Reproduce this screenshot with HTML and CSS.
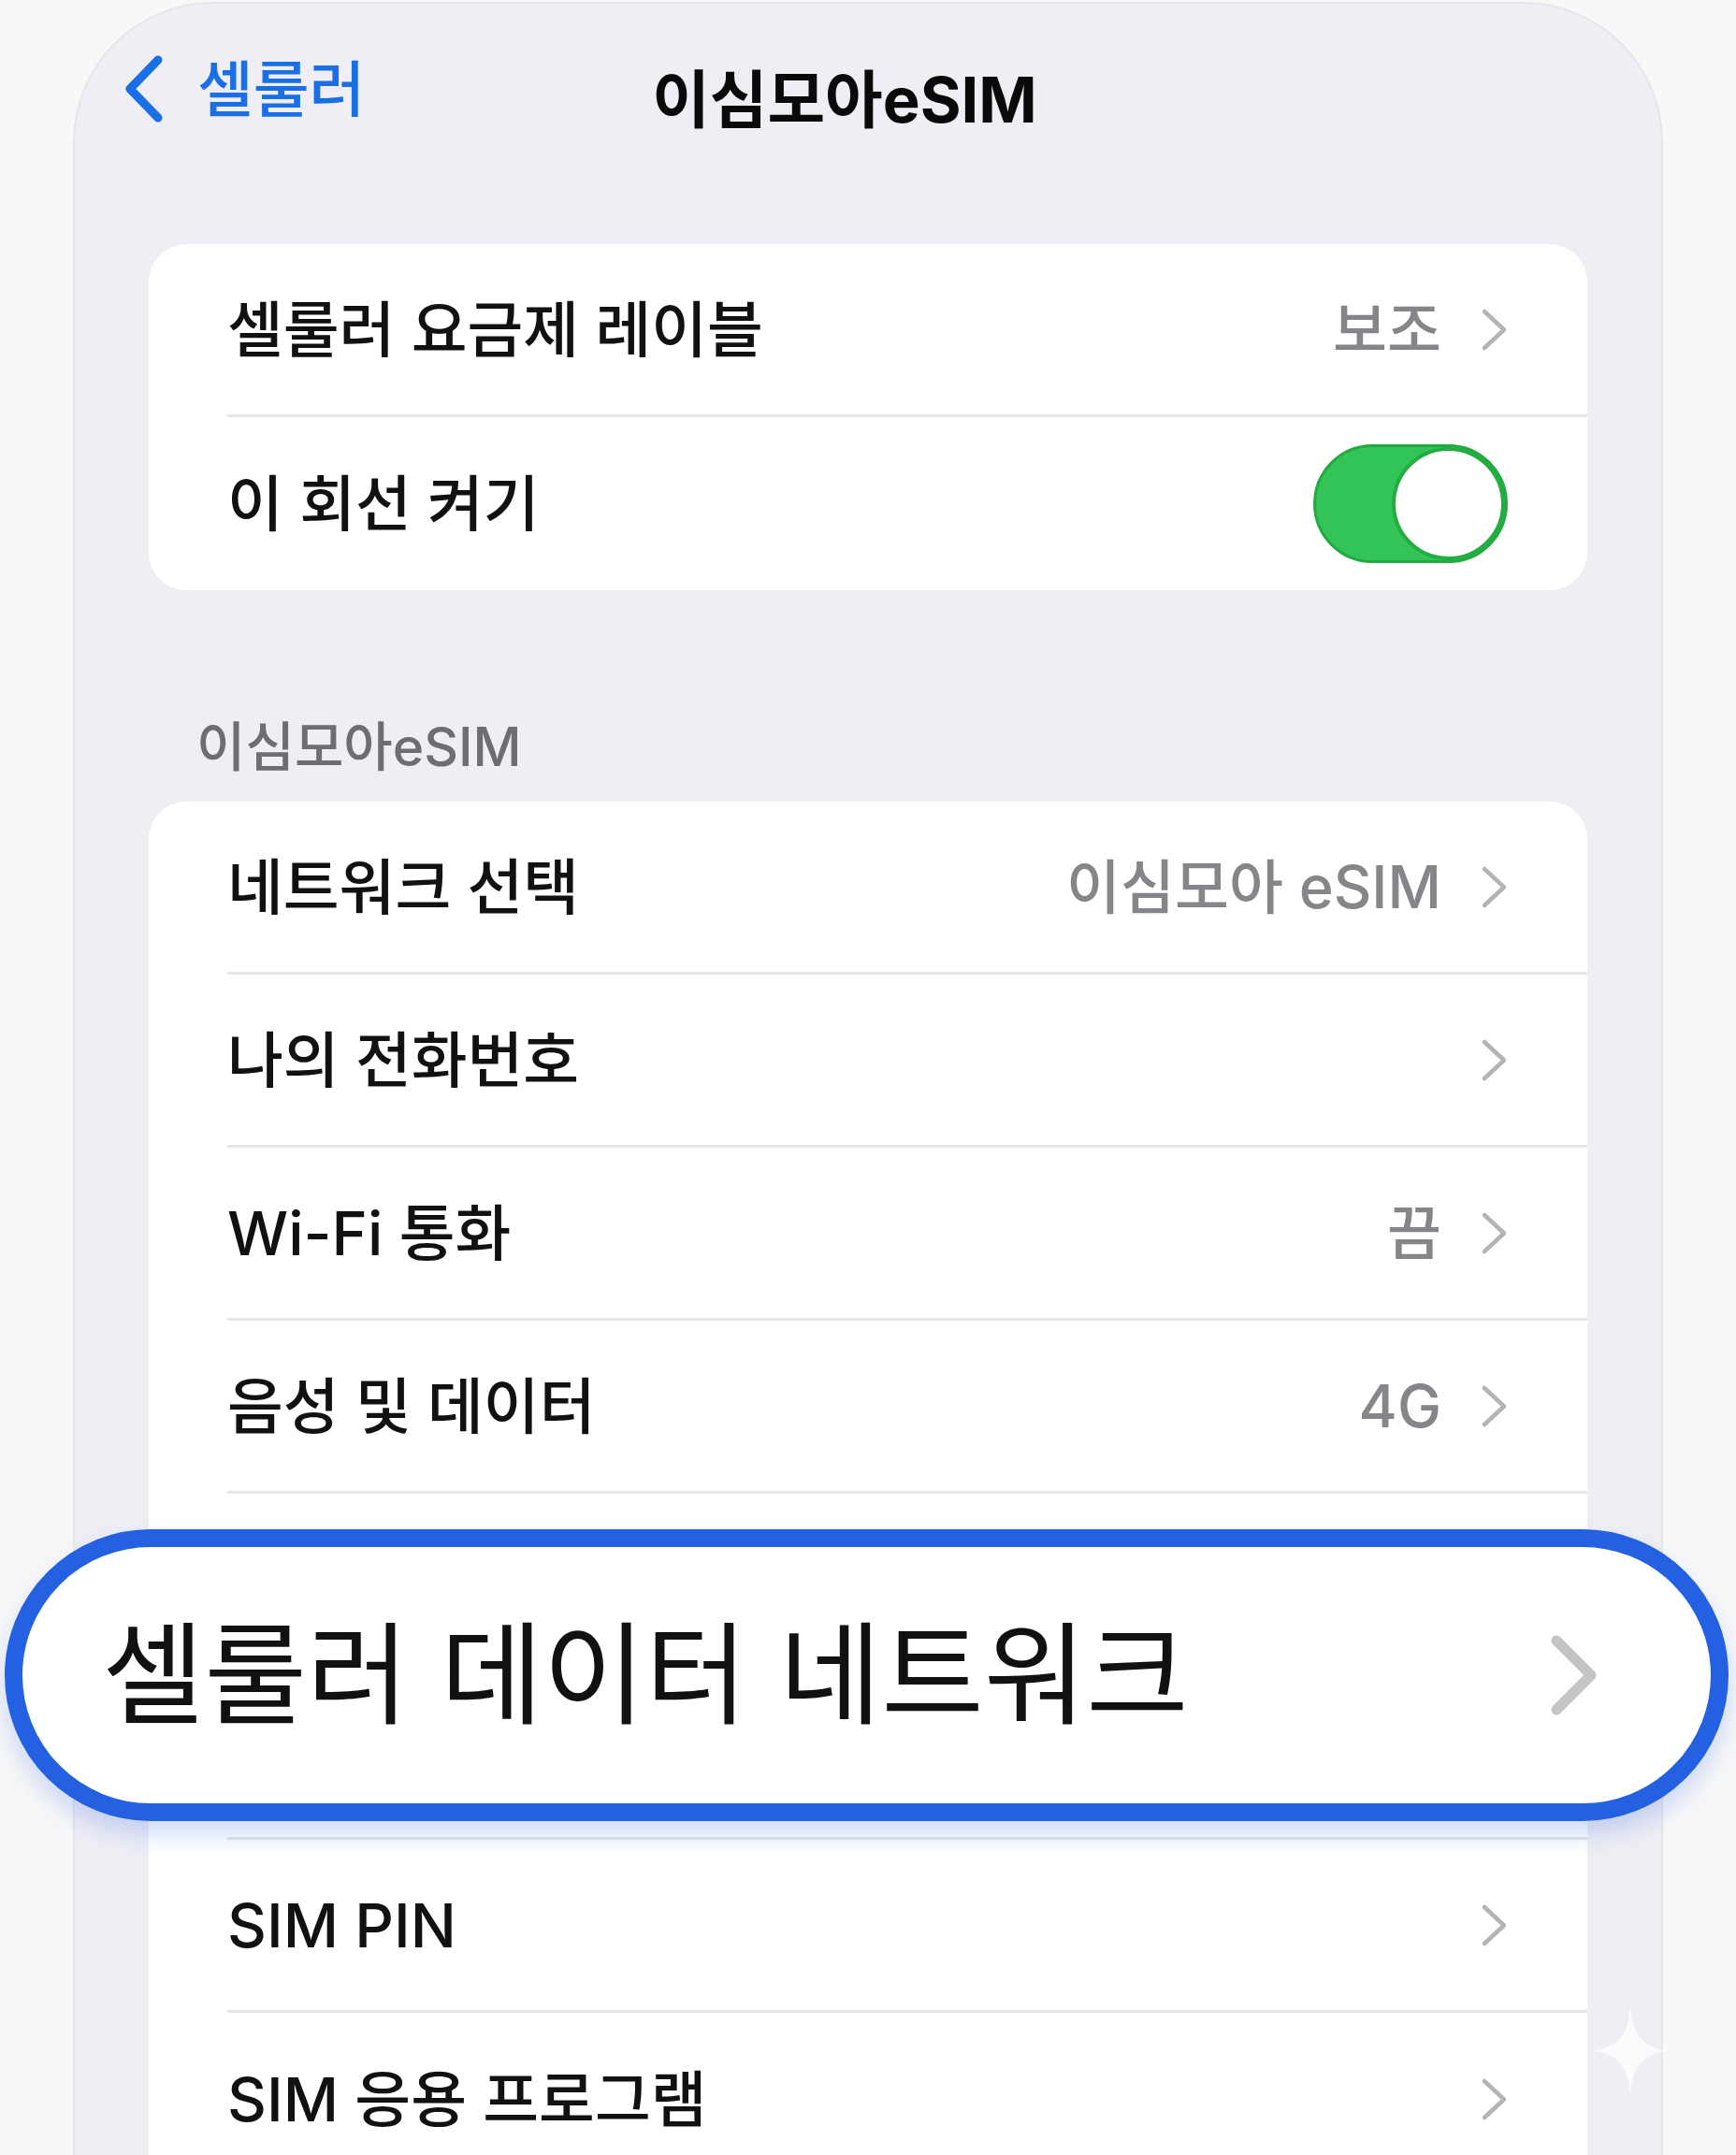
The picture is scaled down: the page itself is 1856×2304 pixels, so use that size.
FILE: index.html
```html
<!DOCTYPE html>
<html lang="ko">
<head>
<meta charset="utf-8">
<title>이심모아eSIM</title>
<link rel="stylesheet" href="styles.css">
</head>
<body>
<div class="phone">
  <header class="nav">
    <a class="back">
      <svg class="back-chev" width="43" height="74" viewBox="0 0 43 74"><path d="M37 6 L7 37 L37 68" fill="none" stroke="#1b6fe6" stroke-width="9" stroke-linecap="round" stroke-linejoin="round"/></svg>
      <span class="back-label">셀룰러</span>
    </a>
    <h1 class="title">이심모아eSIM</h1>
    <span class="nav-spacer"></span>
  </header>

  <section class="group">
    <div class="row"><div class="row-body">
      <span class="label">셀룰러 요금제 레이블</span>
      <span class="detail"><span class="value">보조</span><svg class="chev" width="29" height="47" viewBox="0 0 29 47"><path d="M4 4 L25 23.5 L4 43" fill="none" stroke="#b3b3b8" stroke-width="4.5" stroke-linecap="round" stroke-linejoin="round"/></svg></span>
    </div></div>
    <div class="row"><div class="row-body">
      <span class="label">이 회선 켜기</span>
      <span class="toggle"><span class="knob"></span></span>
    </div></div>
  </section>

  <div class="section-title">이심모아eSIM</div>

  <section class="group">
    <div class="row"><div class="row-body">
      <span class="label">네트워크 선택</span>
      <span class="detail"><span class="value">이심모아 eSIM</span><svg class="chev" width="29" height="47" viewBox="0 0 29 47"><path d="M4 4 L25 23.5 L4 43" fill="none" stroke="#b3b3b8" stroke-width="4.5" stroke-linecap="round" stroke-linejoin="round"/></svg></span>
    </div></div>
    <div class="row"><div class="row-body">
      <span class="label">나의 전화번호</span>
      <span class="detail"><svg class="chev" width="29" height="47" viewBox="0 0 29 47"><path d="M4 4 L25 23.5 L4 43" fill="none" stroke="#b3b3b8" stroke-width="4.5" stroke-linecap="round" stroke-linejoin="round"/></svg></span>
    </div></div>
    <div class="row"><div class="row-body">
      <span class="label">Wi-Fi 통화</span>
      <span class="detail"><span class="value">끔</span><svg class="chev" width="29" height="47" viewBox="0 0 29 47"><path d="M4 4 L25 23.5 L4 43" fill="none" stroke="#b3b3b8" stroke-width="4.5" stroke-linecap="round" stroke-linejoin="round"/></svg></span>
    </div></div>
    <div class="row"><div class="row-body">
      <span class="label">음성 및 데이터</span>
      <span class="detail"><span class="value">4G</span><svg class="chev" width="29" height="47" viewBox="0 0 29 47"><path d="M4 4 L25 23.5 L4 43" fill="none" stroke="#b3b3b8" stroke-width="4.5" stroke-linecap="round" stroke-linejoin="round"/></svg></span>
    </div></div>
    <div class="row"><div class="row-body"></div></div>
    <div class="row"><div class="row-body"></div></div>
    <div class="row"><div class="row-body">
      <span class="label">SIM PIN</span>
      <span class="detail"><svg class="chev" width="29" height="47" viewBox="0 0 29 47"><path d="M4 4 L25 23.5 L4 43" fill="none" stroke="#b3b3b8" stroke-width="4.5" stroke-linecap="round" stroke-linejoin="round"/></svg></span>
    </div></div>
    <div class="row"><div class="row-body">
      <span class="label">SIM 응용 프로그램</span>
      <span class="detail"><svg class="chev" width="29" height="47" viewBox="0 0 29 47"><path d="M4 4 L25 23.5 L4 43" fill="none" stroke="#b3b3b8" stroke-width="4.5" stroke-linecap="round" stroke-linejoin="round"/></svg></span>
    </div></div>
  </section>
</div>

<div class="highlight">
  <span class="highlight-label">셀룰러 데이터 네트워크</span>
  <svg class="highlight-chev" width="51" height="88" viewBox="0 0 51 88"><path d="M7 7 L44 44 L7 81" fill="none" stroke="#c4c4c7" stroke-width="11" stroke-linecap="round" stroke-linejoin="round"/></svg>
</div>

<svg class="sparkle" width="82" height="95" viewBox="0 0 82 95"><path d="M41 0 C44 30 52 44 82 47.5 C52 51 44 65 41 95 C38 65 30 51 0 47.5 C30 44 38 30 41 0 Z" fill="#ffffff" fill-opacity="0.75"/></svg>
</body>
</html>
```

FILE: styles.css
```css
* { box-sizing: border-box; }

html, body { margin: 0; padding: 0; }

body {
  position: relative;
  width: 1856px;
  height: 2304px;
  overflow: hidden;
  background: #f8f8f8;
  font-family: Inter, "Noto Sans CJK KR", sans-serif;
  color: #111111;
}

.phone {
  margin: 2px 0 0 78px;
  width: 1700px;
  min-height: 2420px;
  background: #efeef4;
  border: 2px solid #e6e5ea;
  border-bottom: 0;
  border-radius: 150px 150px 0 0;
}

/* navigation bar */
.nav {
  display: grid;
  grid-template-columns: 1fr auto 1fr;
  align-items: start;
  height: 257px;
  padding: 54px 102px 0 52px;
}

.back {
  display: flex;
  align-items: center;
  gap: 36px;
  height: 74px;
  color: #1b6fe6;
}

.back-chev { display: block; }

.back-label {
  font-size: 65px;
  line-height: 1;
  font-weight: 500;
}

.title {
  margin: 12px 0 0;
  font-size: 67px;
  line-height: 74px;
  font-weight: 700;
  color: #0a0a0a;
}

/* grouped lists */
.group {
  margin: 0 79px;
  background: #ffffff;
  border-radius: 40px;
  overflow: hidden;
}

.row { padding-left: 84px; }

.row-body {
  display: flex;
  align-items: center;
  justify-content: space-between;
  height: 185px;
  padding-right: 85px;
  border-bottom: 3px solid #e4e4e9;
}

.row:last-child .row-body { border-bottom: 0; }

.label {
  font-size: 65px;
  line-height: 1;
  font-weight: 500;
  color: #111111;
}

.detail {
  display: flex;
  align-items: center;
  gap: 42px;
}

.value {
  font-size: 63px;
  line-height: 1;
  font-weight: 500;
  color: #85858a;
}

.chev { display: block; }

.toggle {
  display: flex;
  justify-content: flex-end;
  align-items: center;
  width: 208px;
  height: 127px;
  border-radius: 64px;
  background: #33c457;
  border: 3px solid #22aa41;
}

.knob {
  width: 121px;
  height: 121px;
  border-radius: 50%;
  background: #ffffff;
  border: 4px solid #22ac41;
}

.section-title {
  height: 226px;
  padding: 136px 0 0 130px;
  font-size: 57px;
  line-height: 64px;
  font-weight: 500;
  color: #6d6d72;
}

/* magnified highlight overlay */
.highlight {
  position: absolute;
  left: 5px;
  top: 1635px;
  width: 1843px;
  height: 312px;
  display: flex;
  align-items: center;
  justify-content: space-between;
  padding: 0 121px 0 85px;
  background: #ffffff;
  border: 19px solid #2461e2;
  border-radius: 156px;
  box-shadow: 0 14px 26px rgba(36, 97, 226, 0.22);
}

.highlight-label {
  font-size: 119px;
  line-height: 1;
  color: #111111;
}

.highlight-chev { display: block; }

.sparkle {
  position: absolute;
  left: 1702px;
  top: 2145px;
}
```
